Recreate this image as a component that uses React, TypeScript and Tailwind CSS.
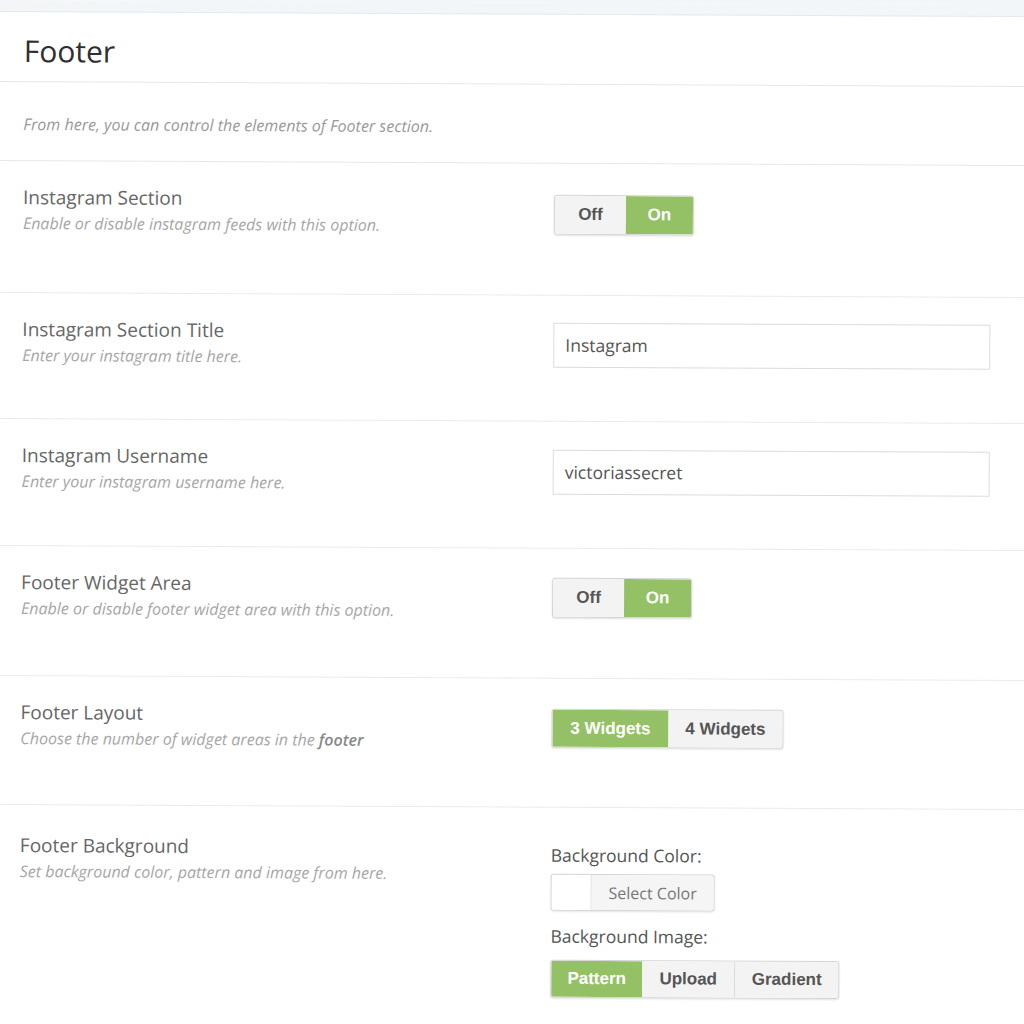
const font = { fontFamily: '"Open Sans", "Liberation Sans", sans-serif' };
const btn = { fontFamily: '"Liberation Sans", Arial, sans-serif' };

function Row({
  title,
  desc,
  children,
  h,
  pt = "pt-[31px]",
  last,
}: {
  title: string;
  desc: React.ReactNode;
  children: React.ReactNode;
  h: string;
  pt?: string;
  last?: boolean;
}) {
  return (
    <div className={`flex ${h} ${last ? "" : "border-b border-[#ebebeb]"}`}>
      <div className={`w-[555px] pl-[24px] ${last ? "pt-[27px]" : "pt-[23px]"}`}>
        <div className="text-[19px] leading-[26px] text-[#666]">{title}</div>
        <div className="mt-[1px] text-[16px] leading-[24px] italic text-[#a6a6a6]">{desc}</div>
      </div>
      <div className={`flex-1 ${pt}`}>{children}</div>
    </div>
  );
}

function Toggle() {
  return (
    <div
      className="flex h-[40px] w-[140px] overflow-hidden rounded-[3px] border border-[#d5d5d5] text-[17px] font-bold shadow-[0_1px_2px_rgba(0,0,0,0.12)]"
      style={btn}
    >
      <div className="flex w-[71px] items-center justify-center bg-[#f3f3f3] text-[#555]">Off</div>
      <div className="flex flex-1 items-center justify-center bg-[#95c166] text-white">On</div>
    </div>
  );
}

function Input({ value }: { value: string }) {
  return (
    <div className="flex h-[45px] w-[437px] items-center border border-[#dcdcdc] px-[11px] text-[17.5px] text-[#555]">
      {value}
    </div>
  );
}

export default function App() {
  return (
    <div className="h-[1024px] overflow-hidden bg-[#f3f6f9]" style={font}>
      <div className="h-[1120px] w-[1120px] origin-top-left rotate-[0.28deg] bg-white">
        <div className="h-[12px] border-b border-[#e6e9ec] bg-[#f3f6f9]" />
        <div className="flex h-[70px] items-center border-b border-[#e8e8e8] pl-[24px] pt-[8px]">
          <h1 className="text-[30px] font-medium text-[#2f2f2f]">Footer</h1>
        </div>
        <div className="flex h-[79px] items-center border-b border-[#e8e8e8] pl-[24px] pt-[6px] text-[16px] italic text-[#999]">
          From here, you can control the elements of Footer section.
        </div>
        <Row h="h-[132px]" title="Instagram Section" desc="Enable or disable instagram feeds with this option.">
          <Toggle />
        </Row>
        <Row h="h-[126px]" pt="pt-[27px]" title="Instagram Section Title" desc="Enter your instagram title here.">
          <Input value="Instagram" />
        </Row>
        <Row h="h-[127px]" pt="pt-[28px]" title="Instagram Username" desc="Enter your instagram username here.">
          <Input value="victoriassecret" />
        </Row>
        <Row h="h-[130px]" pt="pt-[29px]" title="Footer Widget Area" desc="Enable or disable footer widget area with this option.">
          <Toggle />
        </Row>
        <Row
          h="h-[129px]"
          pt="pt-[30px]"
          title="Footer Layout"
          desc={
            <>
              Choose the number of widget areas in the <span className="font-semibold text-[#888]">footer</span>
            </>
          }
        >
          <div
            className="flex h-[39px] w-[232px] overflow-hidden rounded-[3px] border border-[#d5d5d5] text-[17px] font-bold shadow-[0_1px_2px_rgba(0,0,0,0.12)]"
            style={btn}
          >
            <div className="flex w-[116px] items-center justify-center bg-[#95c166] text-white">3 Widgets</div>
            <div className="flex flex-1 items-center justify-center bg-[#f3f3f3] text-[#555]">4 Widgets</div>
          </div>
        </Row>
        <Row h="h-[260px]" title="Footer Background" desc="Set background color, pattern and image from here." last>
          <div className="pt-[4px] text-[17.5px] leading-[24px] text-[#555]">Background Color:</div>
          <div className="mt-[7px] flex h-[37px] w-[164px] overflow-hidden rounded-[3px] border border-[#d5d5d5] shadow-[0_1px_2px_rgba(0,0,0,0.1)]">
            <div className="w-[40px] border-r border-[#dcdcdc] bg-white" />
            <div className="flex flex-1 items-center justify-center bg-[#f5f5f5] text-[16px] text-[#777]">Select Color</div>
          </div>
          <div className="mt-[13px] text-[17.5px] leading-[24px] text-[#555]">Background Image:</div>
          <div
            className="mt-[12px] flex h-[38px] w-[289px] overflow-hidden rounded-[3px] border border-[#d5d5d5] text-[17px] font-bold shadow-[0_1px_2px_rgba(0,0,0,0.12)]"
            style={btn}
          >
            <div className="flex w-[91px] items-center justify-center bg-[#95c166] text-white">Pattern</div>
            <div className="flex w-[93px] items-center justify-center border-r border-[#d5d5d5] bg-[#f3f3f3] text-[#555]">Upload</div>
            <div className="flex flex-1 items-center justify-center bg-[#f3f3f3] text-[#555]">Gradient</div>
          </div>
        </Row>
      </div>
    </div>
  );
}
